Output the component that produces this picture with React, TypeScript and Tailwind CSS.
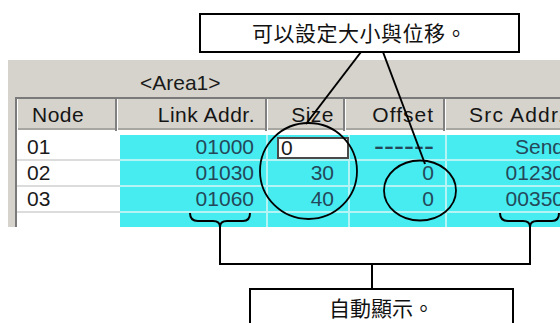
const ui = { fontFamily: '"Liberation Sans", Arial, sans-serif' }
const cjk = { fontFamily: '"Noto Sans CJK TC", "Noto Sans CJK SC", sans-serif' }

const rows = [
  { node: "01", link: "01000", size: "", offset: "------", src: "Send", edit: true },
  { node: "02", link: "01030", size: "30", offset: "0", src: "01230" },
  { node: "03", link: "01060", size: "40", offset: "0", src: "00350" },
  { node: "", link: "", size: "", offset: "", src: "" },
]

const Callouts = () => (
  <svg className="pointer-events-none absolute left-0 top-0" width="560" height="323" viewBox="0 0 560 323" fill="none" stroke="#000">
    <path d="M361 52 L306 124" strokeWidth="2" />
    <path d="M383 52 L425 164" strokeWidth="2" />
    <ellipse cx="308.5" cy="171" rx="48.5" ry="48" strokeWidth="1.8" />
    <ellipse cx="420" cy="190.5" rx="36" ry="30" strokeWidth="1.8" />
    <path d="M190 213 Q190 221 198 221 L213 221 Q220 221 220 227 Q220 221 227 221 L243 221 Q250 221 250 213" strokeWidth="2" />
    <path d="M500 213 Q500 221 508 221 L523 221 Q530 221 530 227 Q530 221 537 221 L552 221 Q559 221 559 213" strokeWidth="2" />
    <path d="M220 227 V264 H530 V227" strokeWidth="2" />
    <path d="M372 264 V288" strokeWidth="2" />
  </svg>
)

const App = () => {
  return (
    <div className="relative h-[323px] w-[560px] overflow-hidden bg-white">
      <div className="h-[60px] pl-[199px] pt-[13px]">
        <div className="flex h-[40px] w-[321px] items-center justify-center border-2 border-black text-[21px] tracking-[0.5px] text-[#111]" style={cjk}>
          可以設定大小與位移。
        </div>
      </div>

      <div className="ml-[8px] h-[167px] overflow-hidden bg-[#d6d3cc]" style={ui}>
        <div className="h-[37px] pl-[132px] pt-[11px] text-[21px] leading-[24px] text-[#1a1a1a]">&lt;Area1&gt;</div>

        <div className="ml-[7px] w-[560px] border-l-2 border-t-2 border-[#7a7a7a] text-[21px]">
          <div className="grid h-[31px] grid-cols-[100px_150px_78px_100px_130px] border-b-2 border-[#a8a6a0] tracking-[0.5px] text-[#151515]">
            <div className="flex items-center border-l border-r-2 border-l-white border-r-[#808080] pl-[14px]">Node</div>
            <div className="flex items-center justify-end border-l border-r-2 border-l-white border-r-[#808080] pr-[10px]">Link Addr.</div>
            <div className="flex items-center justify-end border-l border-r-2 border-l-white border-r-[#808080] pr-[9px]">Size</div>
            <div className="flex items-center justify-end border-l border-r-2 border-l-white border-r-[#808080] pr-[9px] tracking-[1px]">Offset</div>
            <div className="flex items-center whitespace-nowrap border-l border-l-white pl-[23px] tracking-[1.2px]">Src Addr.</div>
          </div>
          <div className="h-[5px] bg-white" />

          {rows.map((r, i) => (
            <div key={i} className="grid h-[26px] grid-cols-[103px_148px_82px_97px_130px] leading-[24px] text-[#24485a]">
              <div className="border-b-2 border-[#dcdcdc] bg-white pl-[10px] text-[#1a1a1a]">{r.node}</div>
              <div className="border-b-2 border-r-2 border-[#b4f4f4] bg-[#46ecf0] pr-[12px] text-right">{r.link}</div>
              <div className="relative border-b-2 border-r-2 border-[#b4f4f4] bg-[#46ecf0] pr-[14px] text-right">
                {r.edit ? (
                  <div className="absolute left-[9px] top-[2px] h-[22px] w-[72px] border-2 border-[#4a4a4a] bg-white pl-[2px] text-left leading-[18px] text-[#1a1a1a]">0</div>
                ) : (
                  r.size
                )}
              </div>
              <div className={`border-b-2 border-r-2 border-[#b4f4f4] bg-[#46ecf0] text-right ${r.edit ? "pr-[11px] text-[30px] leading-[22px]" : "pr-[11px]"}`}>{r.offset}</div>
              <div className="border-b-2 border-[#b4f4f4] bg-[#46ecf0] pr-[13px] text-right">{r.src}</div>
            </div>
          ))}
        </div>
      </div>

      <div className="ml-[249px] mt-[61px] h-[45px] w-[265px] border-2 border-black pt-[3px] text-center text-[21px] leading-[28px] text-[#111]" style={cjk}>
        自動顯示。
      </div>

      <Callouts />
    </div>
  )
}

export default App
